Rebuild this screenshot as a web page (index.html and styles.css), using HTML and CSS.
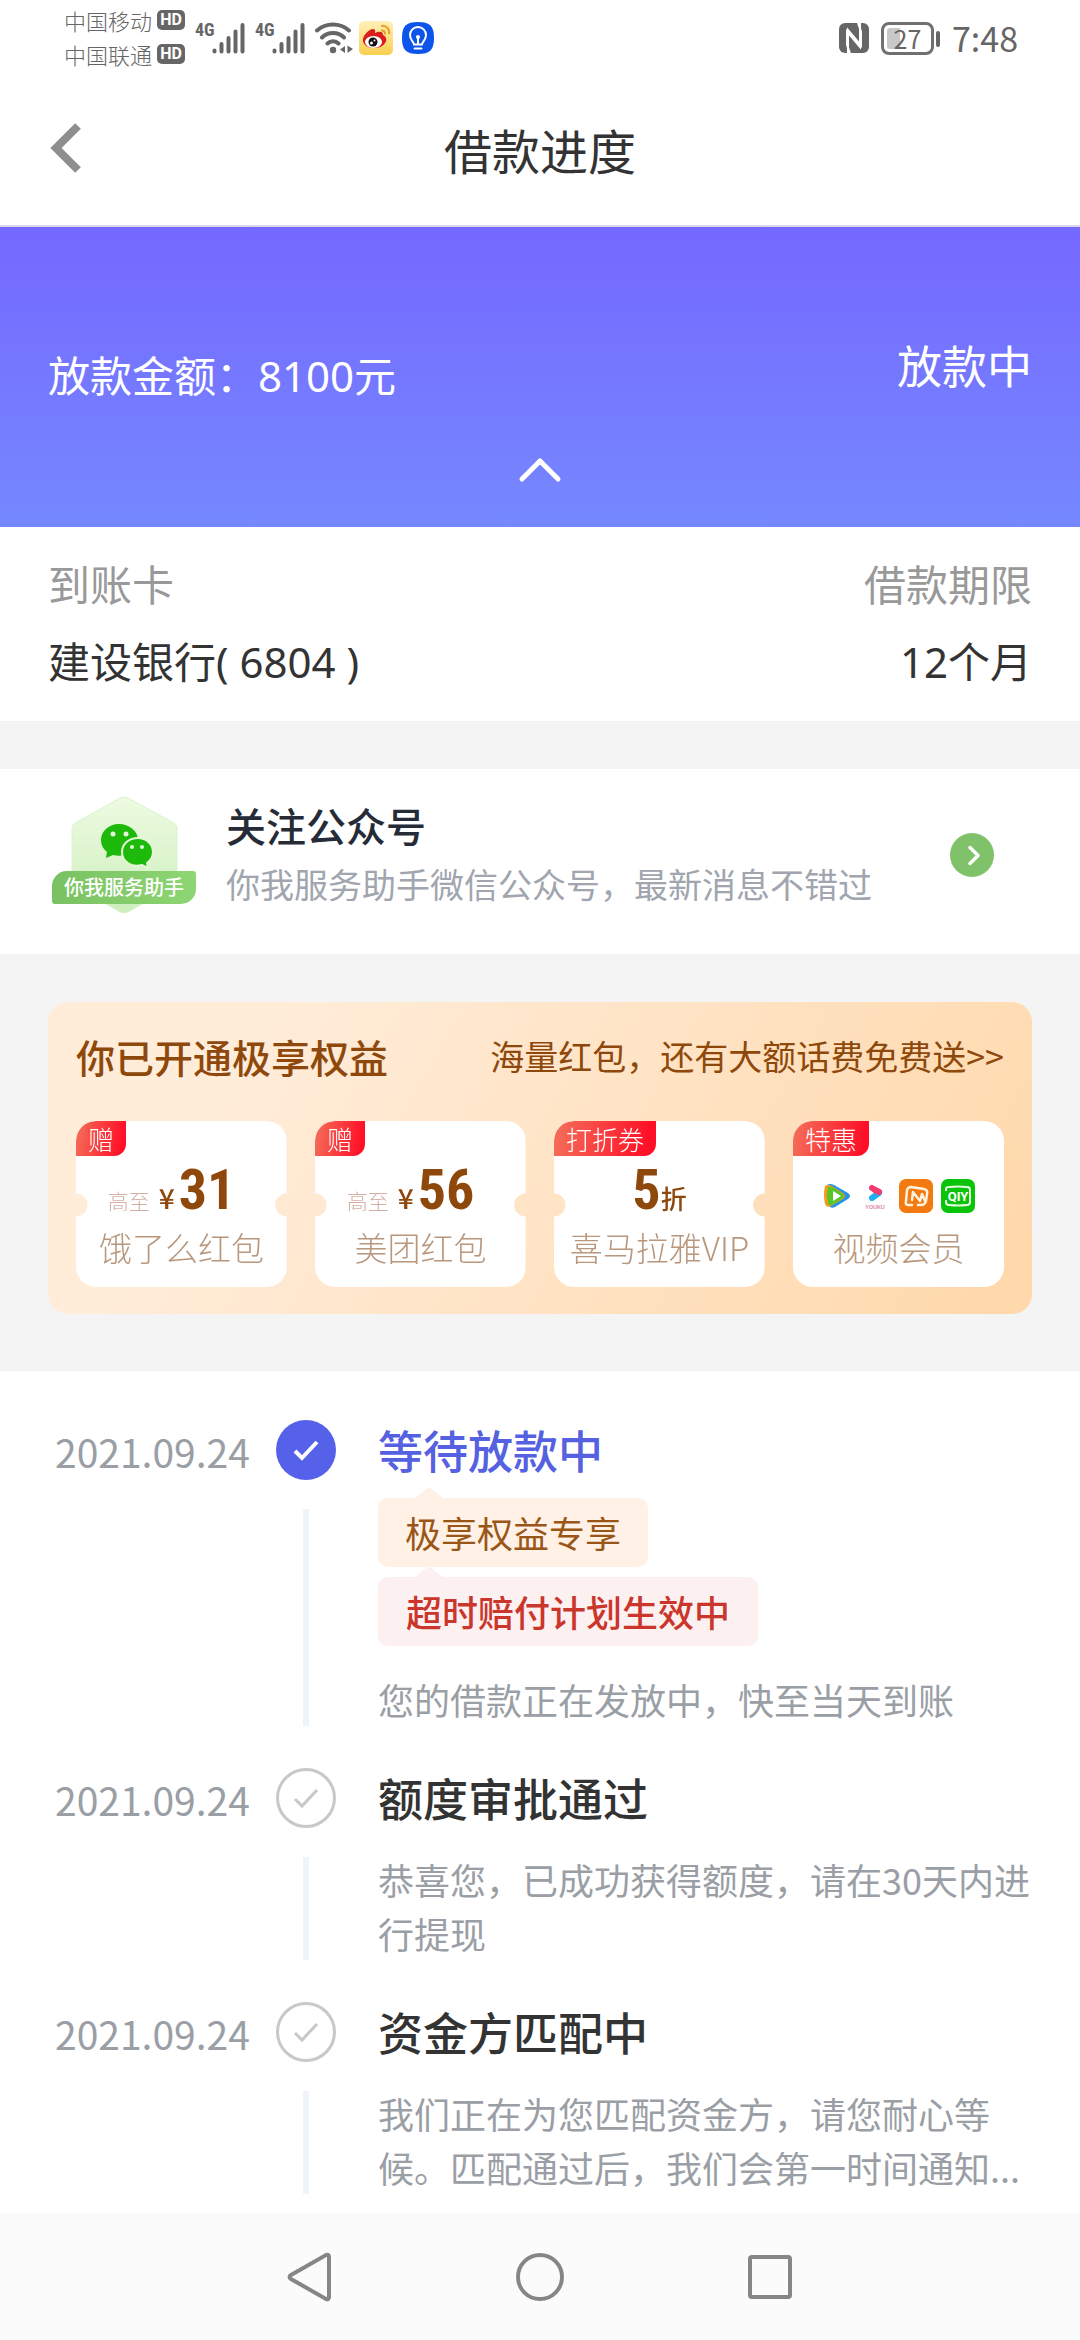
FILE: index.html
```html
<!DOCTYPE html>
<html lang="zh-CN">
<head>
<meta charset="utf-8">
<meta name="viewport" content="width=device-width, initial-scale=1">
<title>借款进度</title>
<link rel="stylesheet" href="styles.css">
</head>
<body>
<div class="status-bar">
  <div class="status-group">
    <div class="carriers">
      <div class="carrier">中国移动<span class="hd">HD</span></div>
      <div class="carrier">中国联通<span class="hd">HD</span></div>
    </div>
    <div class="signal"><span class="net">4G</span>
      <svg width="33" height="32" viewBox="0 0 33 32"><path d="M2.500 28.500v1M9.500 22v7.500M16.500 16v13.500M23.500 9.500v20M30.500 3v26.500" stroke="#666" stroke-width="4" stroke-linecap="round"/></svg>
    </div>
    <div class="signal"><span class="net">4G</span>
      <svg width="33" height="32" viewBox="0 0 33 32"><path d="M2.500 28.500v1M9.500 22v7.500M16.500 16v13.500M23.500 9.500v20M30.500 3v26.500" stroke="#666" stroke-width="4" stroke-linecap="round"/></svg>
    </div>
    <svg class="wifi" width="38" height="32" viewBox="0 0 38 32" fill="none"><path d="M2 8.500C11 .5 25 .5 34 8.500M7 15.500c6-6 16-6 22 0M12.500 21.500c3-3 8-3 11 0" stroke="#666" stroke-width="4" stroke-linecap="round"/><circle cx="18" cy="28" r="3.200" fill="#666"/><path d="M30 24v7l-5-3.500zM32.500 23.500v7.500l5.500-4z" fill="#666"/></svg>
    <svg class="weibo" width="34" height="34" viewBox="0 0 34 34"><defs><linearGradient id="wb" x2="0" y2="1"><stop stop-color="#fff0b8"/><stop offset="1" stop-color="#f8cf50"/></linearGradient></defs><rect width="34" height="34" rx="5" fill="url(#wb)"/><path d="M22 5c5-1 9 3 8 8M22 9.500c3-.5 4.500 1.500 4 4" fill="none" stroke="#eba02c" stroke-width="2"/><path d="M14 8c3 0 2 3 2 4 4-2 8-2 8 2 5 2 4 8-1 11-7 4-18 2-19-5C3 15 10 8 14 8z" fill="#db1d1d"/><ellipse cx="14.500" cy="21" rx="8.500" ry="6" fill="#fff"/><circle cx="14" cy="21" r="4.500" fill="#111"/><circle cx="12.500" cy="22" r="1.500" fill="#fff"/><circle cx="15.500" cy="19.500" r="1" fill="#fff"/></svg>
    <svg width="32" height="32" viewBox="0 0 32 32" fill="none"><path d="M16 0c12 0 16 4 16 16s-4 16-16 16S0 28 0 16 4 0 16 0z" fill="#0d54ea"/><path d="M12 22.500c0-3-4-4-4-9.500a8 8 0 0 1 16 0c0 5.500-4 6.500-4 9.500zM12.500 26.500h7M16 22v-7" stroke="#fff" stroke-width="2" stroke-linecap="round"/><circle cx="16" cy="15" r="2" fill="#fff"/></svg>
  </div>
  <div class="status-group">
    <svg class="nfc" width="30" height="30" viewBox="0 0 30 30"><rect width="30" height="30" rx="6" fill="#666"/><path d="M9 30V7l13 15.500V8.500L19 0M21 0v24L8 8.500V22l3 8" fill="none" stroke="#fff" stroke-width="2"/></svg>
    <div class="battery"><span class="battery-level">27</span></div>
    <time class="clock">7:48</time>
  </div>
</div>

<header class="app-header">
  <button class="back" type="button" aria-label="返回"><svg width="32" height="52" viewBox="0 0 32 52" fill="none"><path d="M28 4L6 26l22 22" stroke="#8e8e8e" stroke-width="8"/></svg></button>
  <h1 class="page-title">借款进度</h1>
</header>

<main>
  <section class="hero">
    <div class="hero-row">
      <p class="amount">放款金额：8100元</p>
      <p class="state">放款中</p>
    </div>
    <button class="collapse" type="button" aria-label="收起"><svg width="44" height="28" viewBox="0 0 44 28" fill="none"><path d="M4 23L22 5l18 18" stroke="#fff" stroke-width="5" stroke-linecap="round" stroke-linejoin="round"/></svg></button>
  </section>

  <dl class="loan-info">
    <div class="info-item"><dt>到账卡</dt><dd>建设银行( 6804 )</dd></div>
    <div class="info-item info-end"><dt>借款期限</dt><dd>12个月</dd></div>
  </dl>

  <a class="follow" href="#follow">
    <span class="follow-badge">
      <svg width="144" height="118" viewBox="0 0 144 118"><defs><linearGradient id="hex" x2="0" y2="1"><stop stop-color="#eefbe2"/><stop offset="1" stop-color="#cdeebb"/></linearGradient></defs><path d="M68 2q4-2 8 0l46 25q3 2 3 5v52q0 4-3 6L76 116q-4 2-8 0L23 90q-3-2-3-6V32q0-3 3-5z" fill="url(#hex)" stroke="#dcf3cf"/><path d="M67 28c-10 0-18 7-18 16 0 5 2 9 6 12l-1 6 7-3c12 3 25-3 25-15 0-9-9-16-19-16z" fill="#1db90b"/><circle cx="61" cy="38" r="2.500" fill="#e4f8d8"/><circle cx="74" cy="38" r="2.500" fill="#e4f8d8"/><path d="M86 42c-9 0-16 6-16 14 0 9 9 16 20 13l6 3-1-5c4-3 6-6 6-11 0-8-7-14-15-14z" fill="#1db90b" stroke="#e4f8d8" stroke-width="2"/><circle cx="80" cy="51" r="2" fill="#e4f8d8"/><circle cx="90" cy="51" r="2" fill="#e4f8d8"/></svg>
      <span class="ribbon">你我服务助手</span>
    </span>
    <span class="follow-text"><strong>关注公众号</strong><span>你我服务助手微信公众号，最新消息不错过</span></span>
    <svg class="go" width="44" height="44" viewBox="0 0 44 44" fill="none"><circle cx="22" cy="22" r="22" fill="#80c269"/><path d="M20 14.500l8 8-8 8" stroke="#fff" stroke-width="3.500" stroke-linecap="round" stroke-linejoin="round"/></svg>
  </a>

  <section class="benefits-band">
    <div class="benefits">
      <div class="benefits-head">
        <h2>你已开通极享权益</h2>
        <a href="#benefits">海量红包，还有大额话费免费送&gt;&gt;</a>
      </div>
      <ul class="tickets">
        <li class="ticket notched"><span class="tag">赠</span><p class="price cash"><small>高至</small><b class="yen">¥</b><b class="num">31</b></p><p class="label">饿了么红包</p></li>
        <li class="ticket notched"><span class="tag">赠</span><p class="price cash"><small>高至</small><b class="yen">¥</b><b class="num">56</b></p><p class="label">美团红包</p></li>
        <li class="ticket notched"><span class="tag">打折券</span><p class="price"><b class="num">5</b><b class="unit">折</b></p><p class="label">喜马拉雅VIP</p></li>
        <li class="ticket"><span class="tag">特惠</span>
          <div class="price brands">
            <svg width="28" height="26" viewBox="0 0 28 26"><path d="M4 2q3-2 7 0l14 8q4 3 0 6l-13 8q-4 2-6-1z" fill="#2393e6"/><path d="M2 3q3-2 7 0l11 7q4 3 0 6L8 23q-5 2-6-2Q0 12 2 3z" fill="#f79a1c"/><path d="M5 4q3-1 6 1l9 6q2 2 0 4L9 22q-4 1-4-2-2-8 0-16z" fill="#58c526"/><path d="M10 8l8 5-8 5z" fill="#fff"/></svg>
            <svg width="32" height="28" viewBox="0 0 32 28"><path d="M13 6l7 4" stroke="#f43b70" stroke-width="6" stroke-linecap="round"/><path d="M13 16l7-5" stroke="#21aef0" stroke-width="6" stroke-linecap="round"/><path d="M16 8l4 2" stroke="#f43b70" stroke-width="6" stroke-linecap="round"/><text x="16" y="27" text-anchor="middle" font-family="Roboto, sans-serif" font-weight="500" font-size="6" fill="#d77d9c">YOUKU</text></svg>
            <svg width="34" height="34" viewBox="0 0 34 34" fill="none"><rect width="34" height="34" rx="7" fill="#f37a10"/><path d="M13 26H9q-3 0-2-4l1-11q1-3 4-3l13 2q4 1 3 5l-1 7q-1 4-5 4h-3M13 21l1-8 7 9 2-7 3 7" stroke="#fff2df" stroke-width="2.500" stroke-linejoin="round" stroke-linecap="round"/></svg>
            <svg width="34" height="34" viewBox="0 0 34 34" fill="none"><rect width="34" height="34" rx="7" fill="#0ac40a"/><path d="M5 12V10q0-2 3-2 9-1 18 0 3 0 3 3v12q0 3-3 3-9 1-18 0-3 0-3-3v-2" stroke="#e6ffe2" stroke-width="2"/><text x="17" y="22" text-anchor="middle" font-family="'Liberation Sans Narrow', Roboto, sans-serif" font-weight="700" font-size="13" fill="#fff">QIY</text></svg>
          </div>
          <p class="label">视频会员</p></li>
      </ul>
    </div>
  </section>

  <ol class="timeline">
    <li class="step current">
      <time class="date">2021.09.24</time>
      <div class="rail"><svg width="60" height="60" viewBox="0 0 60 60" fill="none"><circle cx="30" cy="30" r="30" fill="#5561e8"/><path d="M19 31l7 7 15-16" stroke="#fff" stroke-width="4"/></svg></div>
      <div class="step-body">
        <h3>等待放款中</h3>
        <p class="chip chip-gold">极享权益专享</p>
        <p class="chip chip-red">超时赔付计划生效中</p>
        <p class="desc">您的借款正在发放中，快至当天到账</p>
      </div>
    </li>
    <li class="step">
      <time class="date">2021.09.24</time>
      <div class="rail"><svg width="60" height="60" viewBox="0 0 60 60" fill="none"><circle cx="30" cy="30" r="28.500" stroke="#c8c8c8" stroke-width="3"/><path d="M19 31l7 7 15-16" stroke="#c8c8c8" stroke-width="3"/></svg></div>
      <div class="step-body">
        <h3>额度审批通过</h3>
        <p class="desc">恭喜您，已成功获得额度，请在30天内进行提现</p>
      </div>
    </li>
    <li class="step">
      <time class="date">2021.09.24</time>
      <div class="rail"><svg width="60" height="60" viewBox="0 0 60 60" fill="none"><circle cx="30" cy="30" r="28.500" stroke="#c8c8c8" stroke-width="3"/><path d="M19 31l7 7 15-16" stroke="#c8c8c8" stroke-width="3"/></svg></div>
      <div class="step-body">
        <h3>资金方匹配中</h3>
        <p class="desc">我们正在为您匹配资金方，请您耐心等候。匹配通过后，我们会第一时间通知...</p>
      </div>
    </li>
  </ol>
</main>

<nav class="system-nav">
  <button type="button" aria-label="返回上一页"><svg width="50" height="50" viewBox="0 0 50 50"><path d="M6 23L41 3q3-1 3 2v40q0 3-3 2L6 27q-3-2 0-4z"/></svg></button>
  <button type="button" aria-label="主屏幕"><svg width="50" height="50" viewBox="0 0 50 50"><circle cx="25" cy="25" r="22"/></svg></button>
  <button type="button" aria-label="最近任务"><svg width="50" height="50" viewBox="0 0 50 50"><rect x="5" y="5" width="40" height="40" rx="2"/></svg></button>
</nav>
</body>
</html>
```

FILE: styles.css
```css
* { box-sizing: border-box; }

body {
  margin: 0;
  min-height: 100vh;
  display: flex;
  flex-direction: column;
  background: #fff;
  color: #333;
  font-family: "Noto Sans CJK SC", "Noto Sans", sans-serif;
  font-size: 36px;
}

h1, h2, h3, p, dl, dd, ul, ol { margin: 0; padding: 0; }
ul, ol { list-style: none; }
a { color: inherit; text-decoration: none; }
button { border: 0; padding: 0; background: none; display: flex; align-items: center; justify-content: center; }
svg { display: block; flex: none; }

/* status bar */
.status-bar {
  height: 76px;
  padding: 4px 62px 0 64px;
  display: flex;
  justify-content: space-between;
  align-items: flex-start;
  color: #666;
}
.status-group { display: flex; align-items: center; height: 68px; }
.carriers { padding-bottom: 3px; }
.carrier { display: flex; align-items: center; gap: 5px; height: 34px; font-size: 22px; font-weight: 300; line-height: 34px; }
.hd {
  width: 28px;
  height: 20px;
  border-radius: 5px;
  background: #666;
  color: #fff;
  font: 700 16px/20px Roboto, sans-serif;
  text-align: center;
}
.signal { display: flex; align-items: flex-start; margin-left: 10px; }
.signal .net { width: 17px; font: 700 18px/16px "Liberation Sans Narrow", "Roboto Condensed", Roboto, sans-serif; }
.wifi { margin: 0 6px 0 10px; }
.weibo { margin-right: 9px; }
.nfc { margin-right: 12px; }
.battery {
  position: relative;
  width: 53px;
  height: 33px;
  margin-right: 18px;
  padding: 3px;
  border: 3px solid #707070;
  border-radius: 8px;
}
.battery::after {
  content: "";
  position: absolute;
  left: 52px;
  top: 6px;
  width: 4px;
  height: 16px;
  border-radius: 2px;
  background: #666;
}
.battery-level {
  display: block;
  height: 21px;
  border-radius: 3px;
  background: linear-gradient(90deg, #c8c8c8 13px, transparent 13px);
  font-size: 25px;
  line-height: 20px;
  text-align: center;
}
.clock { font-size: 34px; line-height: 60px; }

/* title bar */
.app-header {
  display: grid;
  grid-template-columns: 1fr auto 1fr;
  align-items: center;
  height: 151px;
  padding: 0 48px 4px;
  border-bottom: 2px solid #d9d8ee;
}
.back { justify-self: start; height: 80px; padding: 0 0 2px 2px; }
.page-title { font-size: 48px; font-weight: 400; line-height: 72px; }

/* amount banner */
.hero { padding: 108px 48px 27px; background: linear-gradient(#7568ff, #7588ff); color: #fff; }
.hero-row { display: flex; justify-content: space-between; align-items: flex-start; }
.amount { font-family: "Noto Sans", "Noto Sans CJK SC", sans-serif; font-size: 42px; line-height: 82px; }
.state { font-size: 45px; line-height: 60px; }
.collapse { width: 100%; height: 60px; margin-top: 23px; }

.loan-info { display: flex; justify-content: space-between; padding: 26px 48px 29px; font-size: 42px; line-height: 60px; }
.info-item { display: grid; gap: 19px; }
.info-item dt { color: #999; }
.info-item dd { font-family: "Noto Sans", "Noto Sans CJK SC", sans-serif; }
.info-end { text-align: right; }

/* official account row */
.follow {
  display: flex;
  align-items: center;
  padding: 27px 86px 40px 52px;
  border-top: 48px solid #f4f4f4;
}
.follow-badge { position: relative; }
.ribbon {
  position: absolute;
  left: 0;
  right: 0;
  top: 75px;
  height: 33px;
  border-radius: 15px 3px;
  background: linear-gradient(90deg, #79c162, #8ed673);
  color: #fff;
  font-size: 20px;
  font-weight: 500;
  line-height: 32px;
  text-align: center;
}
.follow-text { display: flex; flex-direction: column; flex: 1; margin-left: 30px; color: #a0a5ae; font-size: 34px; line-height: 60px; }
.follow-text strong { color: #262b38; font-size: 40px; font-weight: 500; line-height: 58px; }

/* benefits card */
.benefits-band { padding: 48px 48px 57px; background: #f4f4f4; }
.benefits {
  padding: 27px 28px;
  border-radius: 20px;
  background: linear-gradient(120deg, #ffecd9 20%, #ffd8aa);
  color: #8e480b;
}
.benefits-head { display: flex; justify-content: space-between; line-height: 54px; font-size: 34px; }
.benefits-head h2 { font-size: 39px; font-weight: 500; }
.tickets { display: grid; grid-template-columns: repeat(4, 1fr); gap: 28px; margin-top: 38px; }
.ticket { display: flex; flex-direction: column; height: 166px; border-radius: 20px; background: #fff; overflow: hidden; }
.notched {
  mask: radial-gradient(circle at 0 84px, transparent 11px, #000 12px) left / 51% 100% no-repeat, radial-gradient(circle at 100% 84px, transparent 11px, #000 12px) right / 51% 100% no-repeat;
}
.tag {
  align-self: flex-start;
  padding: 0 12px;
  border-bottom-right-radius: 12px;
  background: linear-gradient(100deg, #f4705a, #ff1027 90%);
  color: #fff;
  font-size: 26px;
  font-weight: 300;
  line-height: 35px;
}
.price { display: flex; justify-content: center; align-items: baseline; height: 69px; padding-top: 4px; }
.price.cash { padding-right: 20px; }
.price small { margin-right: 9px; color: #d3aea3; font-size: 21px; font-weight: 300; }
.price .yen { margin-right: 4px; font-size: 28px; font-weight: 500; }
.price .num { font: 700 56px/60px "Liberation Sans Narrow", "Roboto Condensed", Roboto, sans-serif; }
.price .unit { font-size: 26px; font-weight: 500; }
.price.brands { align-items: center; gap: 8px; padding-top: 10px; }
.label { color: #b8977d; font-size: 33px; font-weight: 300; line-height: 44px; text-align: center; }

/* progress timeline */
.timeline { padding: 49px 48px 0; }
.step { display: grid; grid-template-columns: 228px 60px 1fr; padding-bottom: 42px; }
.step:last-child { padding-bottom: 19px; }
.date { padding-left: 7px; color: #9a9ea5; font-size: 39px; line-height: 62px; }
.rail { display: flex; flex-direction: column; align-items: center; gap: 29px; }
.rail::after { content: ""; flex: 1; width: 6px; background: #eff4fa; }
.step-body { padding-left: 42px; }
.step h3 { font-size: 45px; font-weight: 500; line-height: 60px; }
.step.current h3 { color: #5561e0; }
.desc { margin-top: 24px; color: #9a9ea5; font-size: 36px; line-height: 54px; }
.chip { position: relative; width: fit-content; padding: 0 27px; border-radius: 10px; font-size: 36px; line-height: 69px; }
.chip::before {
  content: "";
  position: absolute;
  left: 37px;
  top: -11px;
  border: 14px solid transparent;
  border-top: 0;
  border-bottom: 11px solid;
}
.chip-gold { margin-top: 18px; background: #fff1e6; color: #9a5617; }
.chip-gold::before { border-bottom-color: #fff1e6; }
.chip-red { margin-top: 10px; padding: 0 28px; background: #fdf0f1; color: #cb362c; font-weight: 500; }
.chip-red::before { border-bottom-color: #fdf0f1; }
.chip + .desc { margin-top: 26px; }

/* system navigation */
.system-nav { display: flex; justify-content: center; height: 127px; margin-top: auto; background: #fbfbfb; }
.system-nav button { width: 230px; }
.system-nav svg { fill: none; stroke: #868686; stroke-width: 4; }
```
